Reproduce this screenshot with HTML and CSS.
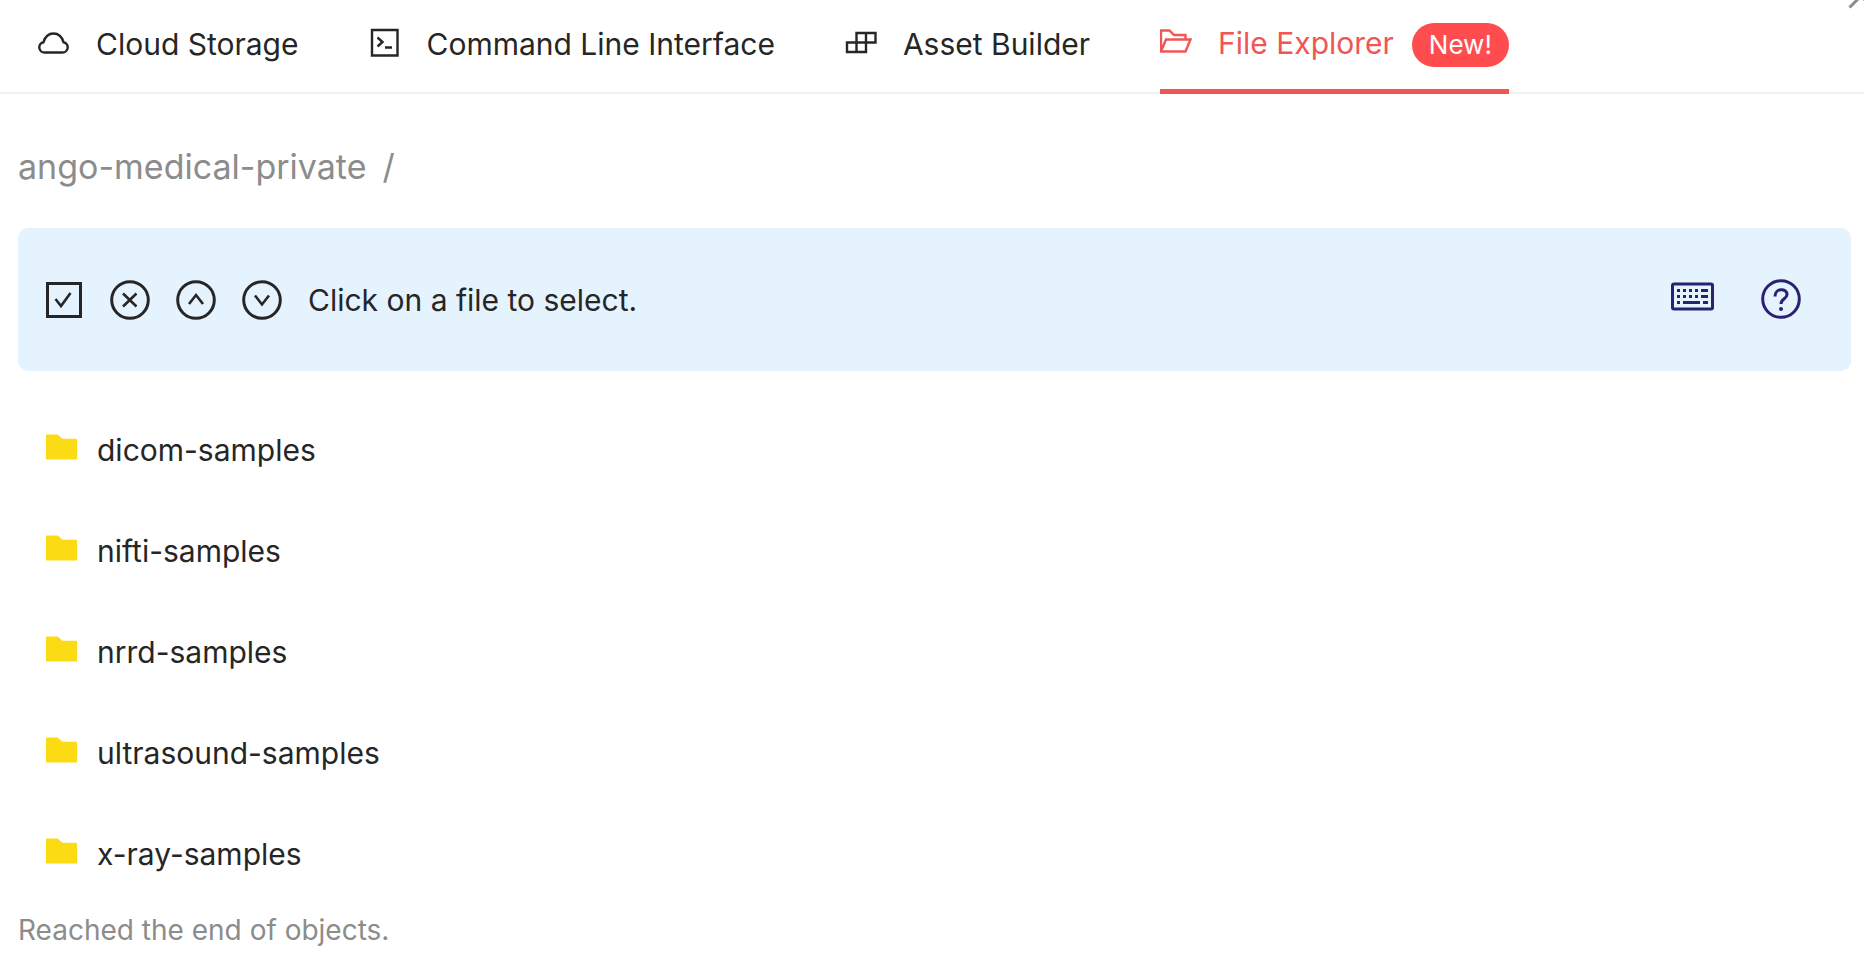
FILE: index.html
```html
<!DOCTYPE html>
<html lang="en">
<head>
    <meta charset="UTF-8">
    <meta name="viewport" content="width=device-width, initial-scale=1.0">
    <title>File Explorer</title>
    <link rel="stylesheet" href="styles.css">
</head>
<body>
    <button class="close-btn" aria-label="Close">
        <svg viewBox="0 0 32 32" class="icon"><path d="M4.500 27.500L27.500 4.500M4.500 4.500L27.500 27.500"/></svg>
    </button>

    <!-- Tabs -->
    <nav class="tabs">
        <a href="#" class="tab">
            <svg viewBox="0 0 32 32" class="icon"><path d="M6.500 26.500h18a5.200 5.200 0 0 0 1-10.300C24 11 20.500 7.500 15.500 7.500S7 11 5.500 16.200A5.200 5.200 0 0 0 6.500 26.500z"/></svg>
            <span>Cloud Storage</span>
        </a>
        <a href="#" class="tab">
            <svg viewBox="0 0 32 32" class="icon"><path d="M3 4h25.500v25.500H3z"/><path d="M8.500 11.500l5 4.500-5 4.500M16 21.500h7"/></svg>
            <span>Command Line Interface</span>
        </a>
        <a href="#" class="tab">
            <svg viewBox="0 0 32 32" class="icon"><path d="M11.500 7h19v9.500h-19zM2 16.500h19V26H2zM21 7v9.500M11.500 16.500V26"/></svg>
            <span>Asset Builder</span>
        </a>
        <a href="#" class="tab active" aria-current="page">
            <svg viewBox="0 0 32 32" class="icon"><path d="M1 26.500V5.500h8.500l4.500 4.500h11.500v4.500M1 26.500l5-12h24.500l-5 12z"/></svg>
            <span>File Explorer</span>
            <span class="badge">New!</span>
        </a>
    </nav>

    <main class="explorer">
        <div class="breadcrumb">
            <a href="#">ango-medical-private</a>
            <span>/</span>
        </div>

        <!-- Toolbar -->
        <div class="toolbar">
            <button class="tool-btn" aria-label="Select all">
                <svg viewBox="0 0 40 40" class="icon"><path d="M3.500 3.500h33v33h-33z"/><path class="thin" d="M11.500 19l5.500 7 9.500-13"/></svg>
            </button>
            <button class="tool-btn" aria-label="Clear selection">
                <svg viewBox="0 0 40 40" class="icon"><circle cx="20" cy="20" r="18.300"/><path class="thin" d="M13 13.500l13.500 13M26.500 13.500L13 26.500"/></svg>
            </button>
            <button class="tool-btn" aria-label="Previous">
                <svg viewBox="0 0 40 40" class="icon"><circle cx="20" cy="20" r="18.300"/><path class="thin" d="M13 24l7-9 7 9"/></svg>
            </button>
            <button class="tool-btn" aria-label="Next">
                <svg viewBox="0 0 40 40" class="icon"><circle cx="20" cy="20" r="18.300"/><path class="thin" d="M13 15.500l7 9 7-9"/></svg>
            </button>
            <span class="hint">Click on a file to select.</span>
            <div class="help">
                <button class="help-btn" aria-label="Keyboard shortcuts">
                    <svg viewBox="0 0 44 40" class="icon"><rect x="1.500" y="5" width="40" height="25" rx="1.500"/><path class="keys" d="M6 11.500h3M12 11.500h3M18 11.500h3M24 11.500h3M30 11.500h7M6 17.500h3M12 17.500h3M18 17.500h3M24 17.500h3M30 17.500h7M6 23.500h3M12 23.500h17M32 23.500h5"/></svg>
                </button>
                <button class="help-btn" aria-label="Help">
                    <svg viewBox="0 0 40 40" class="icon"><circle cx="20" cy="20" r="18.300"/><path d="M14 17.500c0-9 12-8.500 12-2 0 4.500-6 4-6 9.500"/><circle class="dot" cx="20" cy="30" r="2"/></svg>
                </button>
            </div>
        </div>

        <!-- Folder list -->
        <ul class="file-list">
            <li class="file-row">
                <svg viewBox="0 0 32 26" class="folder"><path d="M1 0h11l5 4.500h14q1 0 1 1V25q0 1-1 1H1q-1 0-1-1V1q0-1 1-1z"/></svg>
                <span>dicom-samples</span>
            </li>
            <li class="file-row">
                <svg viewBox="0 0 32 26" class="folder"><path d="M1 0h11l5 4.500h14q1 0 1 1V25q0 1-1 1H1q-1 0-1-1V1q0-1 1-1z"/></svg>
                <span>nifti-samples</span>
            </li>
            <li class="file-row">
                <svg viewBox="0 0 32 26" class="folder"><path d="M1 0h11l5 4.500h14q1 0 1 1V25q0 1-1 1H1q-1 0-1-1V1q0-1 1-1z"/></svg>
                <span>nrrd-samples</span>
            </li>
            <li class="file-row">
                <svg viewBox="0 0 32 26" class="folder"><path d="M1 0h11l5 4.500h14q1 0 1 1V25q0 1-1 1H1q-1 0-1-1V1q0-1 1-1z"/></svg>
                <span>ultrasound-samples</span>
            </li>
            <li class="file-row">
                <svg viewBox="0 0 32 26" class="folder"><path d="M1 0h11l5 4.500h14q1 0 1 1V25q0 1-1 1H1q-1 0-1-1V1q0-1 1-1z"/></svg>
                <span>x-ray-samples</span>
            </li>
        </ul>
        <p class="list-end">Reached the end of objects.</p>
    </main>
</body>
</html>
```

FILE: styles.css
```css
:root {
    --text-color: #262626;
    --muted-color: #8c8c8c;
    --active-color: #f05654;
    --badge-color: #ff4d4f;
    --toolbar-color: #e5f3ff;
    --help-color: #2b2171;
    --folder-color: #fadb14;
}

* {
    box-sizing: border-box;
}

body {
    margin: 0;
    font-family: Inter, "Liberation Sans", sans-serif;
    font-size: 30px;
    line-height: 44px;
    color: var(--text-color);
    background-color: white;
    position: relative;
    overflow-x: hidden;
}

button {
    padding: 0;
    border: none;
    background: none;
    color: inherit;
    cursor: pointer;
}

a {
    color: inherit;
    text-decoration: none;
}

.icon {
    display: block;
    fill: none;
    stroke: currentColor;
    stroke-width: 2;
}

/* Close button, sits over the top right corner */
.close-btn {
    position: absolute;
    top: -20px;
    right: -13px;
    color: var(--muted-color);
}

.close-btn .icon {
    width: 32px;
    height: 32px;
    stroke-width: 3;
}

/* Tabs */
.tabs {
    display: flex;
    gap: 70px;
    height: 94px;
    padding-left: 38px;
    border-bottom: 2px solid #f0f0f0;
}

.tab {
    display: flex;
    align-items: center;
    height: 94px;
    padding-bottom: 7px;
    white-space: nowrap;
}

.tab .icon {
    width: 32px;
    height: 32px;
    margin-right: 26px;
    margin-bottom: 4px;
    stroke-width: 2.4;
}

.tab.active {
    color: var(--active-color);
    border-bottom: 5px solid var(--active-color);
    padding-bottom: 3px;
}

.badge {
    margin-top: 4px;
    margin-left: 18px;
    padding: 0 17px;
    border-radius: 22px;
    font-size: 26px;
    color: white;
    background-color: var(--badge-color);
}

/* Explorer */
.explorer {
    padding: 48px 13px 0 18px;
}

.breadcrumb {
    display: flex;
    gap: 16px;
    margin-bottom: 36px;
    font-size: 34px;
    line-height: 50px;
    color: var(--muted-color);
}

.toolbar {
    display: flex;
    align-items: center;
    gap: 26px;
    height: 143px;
    padding: 0 50px 0 26px;
    border-radius: 10px;
    background-color: var(--toolbar-color);
}

.tool-btn .icon,
.help-btn .icon {
    height: 40px;
    stroke-width: 3;
}

.tool-btn .icon .thin {
    stroke-width: 2.6;
}

.icon .dot {
    fill: currentColor;
    stroke: none;
}

.help {
    display: flex;
    gap: 46px;
    margin-bottom: 2px;
    margin-left: auto;
    color: var(--help-color);
}

/* File list */
.file-list {
    margin: 28px 0 0;
    padding: 0;
    list-style: none;
}

.file-row {
    display: flex;
    align-items: center;
    gap: 20px;
    height: 101px;
    padding-left: 28px;
}

.folder {
    width: 31px;
    height: 26px;
    margin-bottom: 5px;
    fill: var(--folder-color);
}

.list-end {
    margin: 4px 0 0;
    font-size: 28px;
    color: var(--muted-color);
}
```
